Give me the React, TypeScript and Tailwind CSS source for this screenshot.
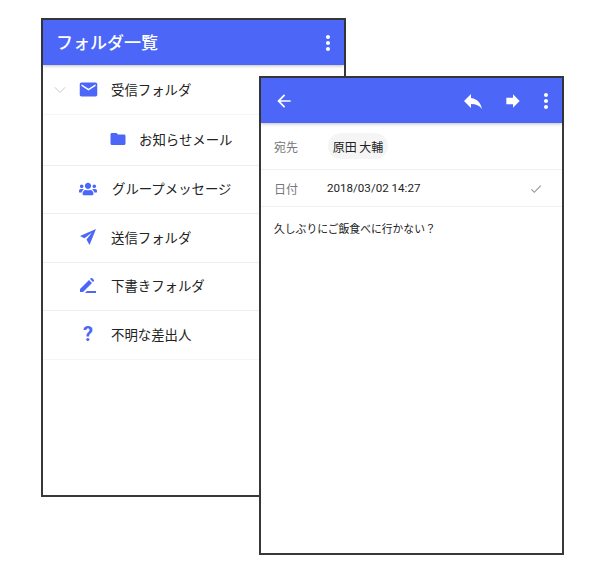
import { ChevronDown } from "lucide-react";
import { FaUsers } from "react-icons/fa";
import { MdArrowBack, MdCheck, MdEmail, MdFolder, MdForward, MdMoreVert, MdReply } from "react-icons/md";

const font = "font-['Noto_Sans_CJK_JP','Noto_Sans',sans-serif]";

export default function App() {
  return (
    <div className={`relative h-[573px] w-[600px] overflow-hidden bg-white ${font}`}>
      <div className="pl-[41px] pt-[18px]">
        <FolderList />
      </div>
      {/* second window sits over the first one */}
      <div className="absolute left-[259px] top-[76px]">
        <MailDetail />
      </div>
    </div>
  );
}

function SendIcon() {
  return (
    <svg width="16" height="16" viewBox="0 0 16 16" className="text-[#4c66f8]">
      <path fill="currentColor" d="M16 0 0 7l4.5 2.2L12 3.5 6.5 10.5 9.5 16z" />
    </svg>
  );
}

function PenIcon() {
  return (
    <svg width="16" height="15" viewBox="0 0 16 15" className="text-[#4c66f8]">
      <path fill="currentColor" d="M0 11 9 2l3 3-9 9H0zM10 1l1-1h1l2 2v1l-1 1zM7 13h9v2H5z" />
    </svg>
  );
}

function FolderList() {
  return (
    <div className="h-[479px] w-[305px] border-2 border-[#383838] bg-white">
      <div className="flex h-[45px] items-center justify-between bg-[#4c66f8] pl-[13px] pr-[4px] shadow-[0_1px_3px_rgba(0,0,0,0.25)]">
        <span className="pb-[2px] text-[17px] font-medium text-white">フォルダ一覧</span>
        <MdMoreVert className="text-white" size={24} />
      </div>

      <div className="flex h-[50px] items-center border-b border-[#f5f5f5] pl-[7px] text-[13.4px] text-[#222]">
        <ChevronDown className="text-[#bdbdbd]" size={20} strokeWidth={1} />
        <span className="ml-[6px] flex w-[24px] justify-center">
          <MdEmail className="text-[#4c66f8]" size={21} />
        </span>
        <span className="ml-[11px]">受信フォルダ</span>
      </div>
      <div className="flex h-[51px] items-center border-b border-[#eeeeee] pb-[2px] pl-[66px] text-[13.4px] text-[#222]">
        <MdFolder className="text-[#4c66f8]" size={18} />
        <span className="ml-[12px]">お知らせメール</span>
      </div>
      <div className="flex h-[48px] items-center border-b border-[#eeeeee] pb-[2px] pl-[33px] text-[13.4px] text-[#222]">
        <span className="flex w-[24px] justify-center">
          <FaUsers className="text-[#4c66f8]" size={18} />
        </span>
        <span className="ml-[12px]">グループメッセージ</span>
      </div>
      <div className="flex h-[49px] items-center border-b border-[#eeeeee] pb-[2px] pl-[33px] text-[13.4px] text-[#222]">
        <span className="flex w-[24px] justify-center">
          <SendIcon />
        </span>
        <span className="ml-[11px]">送信フォルダ</span>
      </div>
      <div className="flex h-[48px] items-center border-b border-[#eeeeee] pb-[2px] pl-[33px] text-[13.4px] text-[#222]">
        <span className="flex w-[24px] justify-center">
          <PenIcon />
        </span>
        <span className="ml-[11px]">下書きフォルダ</span>
      </div>
      <div className="flex h-[49px] items-center border-b border-[#f5f5f5] pb-[2px] pl-[33px] text-[13.4px] text-[#222]">
        <span className="flex w-[24px] justify-center font-['Roboto',sans-serif] text-[20px] font-bold text-[#4c66f8]">?</span>
        <span className="ml-[11px]">不明な差出人</span>
      </div>
    </div>
  );
}

function MailDetail() {
  return (
    <div className="h-[479px] w-[305px] border-2 border-[#383838] bg-white">
      <div className="flex h-[45px] items-center bg-[#4c66f8] pl-[13px] pr-[4px] text-white shadow-[0_1px_3px_rgba(0,0,0,0.25)]">
        <MdArrowBack size={20} />
        <MdReply className="ml-auto" size={24} />
        <MdForward className="ml-[18px]" size={20} />
        <MdMoreVert className="ml-[11px]" size={24} />
      </div>

      <div className="flex h-[47px] items-center border-b border-[#f0f0f0] pl-[13px]">
        <span className="w-[54px] pt-[2px] text-xs text-[#777]">宛先</span>
        <span className="flex h-[26px] w-[60px] items-center justify-center rounded-full bg-[#f5f5f5] pt-[2px] text-xs text-[#222]">
          原田 大輔
        </span>
      </div>
      <div className="flex h-[37px] items-center border-b border-[#f0f0f0] pl-[13px] pr-[19px] pt-[2px]">
        <span className="w-[53px] text-xs text-[#777]">日付</span>
        <span className="font-['Roboto',sans-serif] text-[11.6px] text-[#222]">2018/03/02 14:27</span>
        <MdCheck className="ml-auto text-[#999]" size={14} />
      </div>
      <p className="pl-[13px] pt-[12px] text-[10.8px] leading-[18px] text-[#222]">久しぶりにご飯食べに行かない？</p>
    </div>
  );
}
